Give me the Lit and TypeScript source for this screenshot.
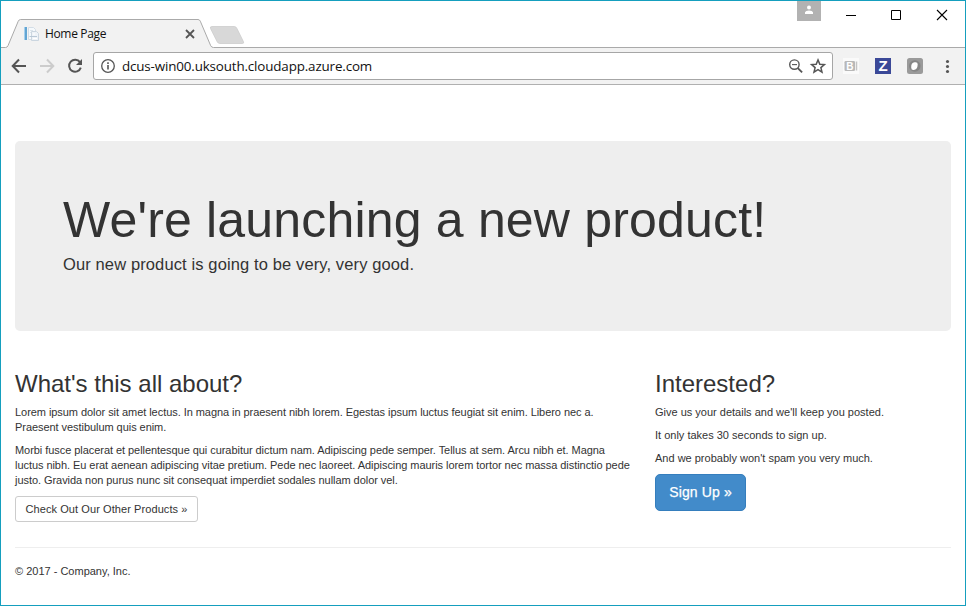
import { LitElement, html, css } from "lit";
import { customElement } from "lit/decorators.js";

@customElement("browser-tabs")
class BrowserTabs extends LitElement {
  static styles = css`
    :host { display: block; height: 47px; background: #fff; position: relative; }
    .shape { position: absolute; left: 0; top: 0; }
    .row { position: relative; display: flex; align-items: flex-start; height: 47px; }
    .tab { display: flex; align-items: center; width: 177px; margin: 19px 0 0 22px; height: 28px; }
    .title { font: 12px/16px "Open Sans", "Noto Sans", sans-serif; letter-spacing: -0.35px; color: #111; margin-left: 6px; flex: 1; }
    .controls { margin-left: auto; display: flex; height: 30px; }
    .user { width: 24px; margin-right: 8px; }
    svg { display: block; }
  `;
  render() {
    return html`
      <svg class="shape" width="964" height="47" viewBox="1 1 964 47">
        <path d="M1 47.5H5.5Q7.3 47.5 8 45.7L18.2 21.3Q19 19.5 20.5 19.5H198Q199.6 19.5 200.3 21.2L210.7 45.7Q211.5 47.5 213.5 47.5H965V49H1Z" fill="#f2f2f2"/>
        <path d="M1 47.5H5.5Q7.3 47.5 8 45.7L18.2 21.3Q19 19.5 20.5 19.5H198Q199.6 19.5 200.3 21.2L210.7 45.7Q211.5 47.5 213.5 47.5H965" fill="none" stroke="#aaa"/>
        <path d="M212 26.5H234.3Q236 26.5 236.8 28.2L243.5 41.8Q244.2 43.5 242.5 43.5H219.8Q218 43.5 217.2 41.8L210.5 28.5Q209.7 26.5 212 26.5Z" fill="#d8d8d8" stroke="#c8c8c8" stroke-width=".7"/>
      </svg>
      <div class="row">
        <div class="tab">
          <svg width="16" height="16" viewBox="0 0 16 16">
            <path d="M1 1H4V14H1Z" fill="#62a5d3"/><path d="M1 1H2V14H1Z" fill="#a5d0ee"/>
            <path d="M5.5 1.5H10.5L12.5 3.5V13.5H5.5Z" fill="#f5f9fc" stroke="#d3dde6"/>
            <path d="M7 4.5H10M7 6.5H9" stroke="#dbe4eb"/>
            <path d="M8.5 5.5H13.5L15.5 7.5V14.5H8.5Z" fill="#eef3f8" stroke="#cbd6e0"/>
            <path d="M6.5 10.5H14" stroke="#b9c8d6"/><path d="M10 12.5H14M10 8H12" stroke="#fff"/>
          </svg>
          <span class="title">Home Page</span>
          <svg width="16" height="28" viewBox="0 0 16 28"><path d="M2 10L10 18M10 10L2 18" stroke="#555" stroke-width="1.8"/></svg>
        </div>
        <div class="controls">
          <svg class="user" width="24" height="20" viewBox="0 0 24 20"><path d="M0 0H24V20H0Z" fill="#b2b2b2"/><circle cx="12" cy="6.5" r="2" fill="#fff"/><path d="M8 13V11.3Q8.6 9.5 12 9.5T16 11.3V13Z" fill="#fff"/></svg>
          <svg width="136" height="30" viewBox="829 1 136 30" fill="none" stroke="#000">
            <path d="M846 15.5H856M891.5 10.5H900.5V19.5H891.5Z"/><path d="M937 10L947 20M947 10L937 20" stroke-width="1.1"/>
          </svg>
        </div>
      </div>`;
  }
}

@customElement("browser-toolbar")
class BrowserToolbar extends LitElement {
  static styles = css`
    :host { display: flex; box-sizing: border-box; height: 37px; background: #f2f2f2; border-bottom: 1px solid #b0b0b0; padding-top: 4px; }
    svg { display: block; flex: none; }
    .box { display: flex; box-sizing: border-box; width: 740px; height: 28px; background: #fff; border: 1px solid #a6a6a6; border-radius: 3px; }
    .url { font: 13.4px/26px "Open Sans", "Noto Sans", sans-serif; letter-spacing: -0.15px; color: #111; flex: 1; white-space: nowrap; }
    .z { font: bold 15px "Liberation Sans", sans-serif; }
    .b { font: bold 10px "Liberation Sans", sans-serif; }
  `;
  render() {
    return html`
      <svg width="92" height="28" viewBox="1 52 92 28" fill="none">
        <path d="M26 66H13M19 59.5L12.7 66L19 72.5" stroke="#555" stroke-width="2"/>
        <path d="M40 66H53M47 59.5L53.3 66L47 72.5" stroke="#ccc" stroke-width="2"/>
        <path d="M80 62.2A6 6 0 1 0 80.8 67.7" stroke="#555" stroke-width="2"/>
        <path d="M82 59V65H76Z" fill="#555"/>
      </svg>
      <div class="box">
        <svg width="28" height="26" viewBox="94 53 28 26"><circle cx="108" cy="66" r="6.3" fill="none" stroke="#555" stroke-width="1.3"/><path d="M107.2 65H108.8V69.5H107.2ZM107.2 62.3H108.8V63.9H107.2Z" fill="#555"/></svg>
        <span class="url">dcus-win00.uksouth.cloudapp.azure.com</span>
        <svg width="50" height="26" viewBox="782 53 50 26" fill="none" stroke="#555">
          <circle cx="794.4" cy="64.6" r="4.7" stroke-width="1.4"/><path d="M792 64.6H797" stroke-width="1.1"/><path d="M797.8 68.1L802.1 72.4" stroke-width="1.9"/>
          <path d="M818 59.9L819.8 64.2L824.4 64.6L820.9 67.6L822 72.1L818 69.7L814 72.1L815.1 67.6L811.6 64.6L816.2 64.2Z" stroke-width="1.5"/>
        </svg>
      </div>
      <svg width="132" height="28" viewBox="833 52 132 28">
        <path d="M843 58H859V74H843Z" fill="#fafafa"/>
        <rect x="844.5" y="61" width="10.5" height="10" rx="1.2" fill="#b8b8b8"/><path d="M856.5 61.5V70.5" stroke="#c4c4c4" stroke-width="1.5"/>
        <text class="b" x="846.2" y="69.6" fill="#fff">B</text>
        <path d="M875 58H891V74H875Z" fill="#3b4998"/><text class="z" x="878.4" y="71.3" fill="#fff">Z</text>
        <rect x="907" y="58" width="16" height="16" rx="2.5" fill="#9a9a9a"/><circle cx="914.8" cy="66" r="5.8" fill="#868686"/>
        <path d="M911.2 67.5Q911 62.5 914.5 62.3Q917.8 61.7 917.7 64.5Q917.5 69.5 913.7 70Q911.2 70.2 911.2 67.5Z" fill="#fff"/>
        <circle cx="947.5" cy="61.5" r="1.55" fill="#555"/><circle cx="947.5" cy="66.5" r="1.55" fill="#555"/><circle cx="947.5" cy="71.5" r="1.55" fill="#555"/>
      </svg>`;
  }
}

@customElement("app-root")
class AppRoot extends LitElement {
  static styles = css`
    :host { display: block; box-sizing: border-box; width: 966px; height: 606px; overflow: hidden; background: #fff; border: 1px solid #159fbe;
      font: 11px/15px "Liberation Sans", Arial, sans-serif; color: #333; }
    main { padding: 56px 14px 0; }
    h1, h2, p { margin: 0; font-weight: 400; white-space: nowrap; }
    .hero { box-sizing: border-box; height: 190px; background: #eee; border-radius: 5px; padding: 54px 48px 0; }
    h1 { font-size: 50px; line-height: 50px; letter-spacing: 0.18px; }
    .lead { font-size: 16.5px; line-height: 22px; margin-top: 8px; letter-spacing: 0.12px; }
    .columns { display: grid; grid-template-columns: 640px 1fr; margin-top: 40px; height: 151px; }
    .about p { letter-spacing: -0.055px; }
    h2 { font-size: 24px; line-height: 26px; margin-bottom: 8px; }
    p { margin-bottom: 8px; }
    .btn { box-sizing: border-box; display: flex; align-items: center; justify-content: center; white-space: nowrap; }
    .plain { width: 183px; height: 26px; border: 1px solid #ccc; border-radius: 3px; letter-spacing: 0.08px; }
    .primary { width: 91px; height: 37px; border: 1px solid #357ebd; border-radius: 5px; background: #428bca; color: #fff; font-size: 14px; letter-spacing: 0.12px; -webkit-text-stroke: 0.25px #fff; }
    footer { border-top: 1px solid #eee; margin-top: 25px; padding-top: 16px; }
  `;
  render() {
    return html`
      <browser-tabs></browser-tabs>
      <browser-toolbar></browser-toolbar>
      <main>
        <section class="hero">
          <h1>We're launching a new product!</h1>
          <p class="lead">Our new product is going to be very, very good.</p>
        </section>
        <div class="columns">
          <section class="about">
            <h2>What's this all about?</h2>
            <p>Lorem ipsum dolor sit amet lectus. In magna in praesent nibh lorem. Egestas ipsum luctus feugiat sit enim. Libero nec a.<br>Praesent vestibulum quis enim.</p>
            <p>Morbi fusce placerat et pellentesque qui curabitur dictum nam. Adipiscing pede semper. Tellus at sem. Arcu nibh et. Magna<br>luctus nibh. Eu erat aenean adipiscing vitae pretium. Pede nec laoreet. Adipiscing mauris lorem tortor nec massa distinctio pede<br>justo. Gravida non purus nunc sit consequat imperdiet sodales nullam dolor vel.</p>
            <div class="btn plain">Check Out Our Other Products »</div>
          </section>
          <section>
            <h2>Interested?</h2>
            <p>Give us your details and we'll keep you posted.</p>
            <p>It only takes 30 seconds to sign up.</p>
            <p>And we probably won't spam you very much.</p>
            <div class="btn primary">Sign Up »</div>
          </section>
        </div>
        <footer>© 2017 - Company, Inc.</footer>
      </main>`;
  }
}
